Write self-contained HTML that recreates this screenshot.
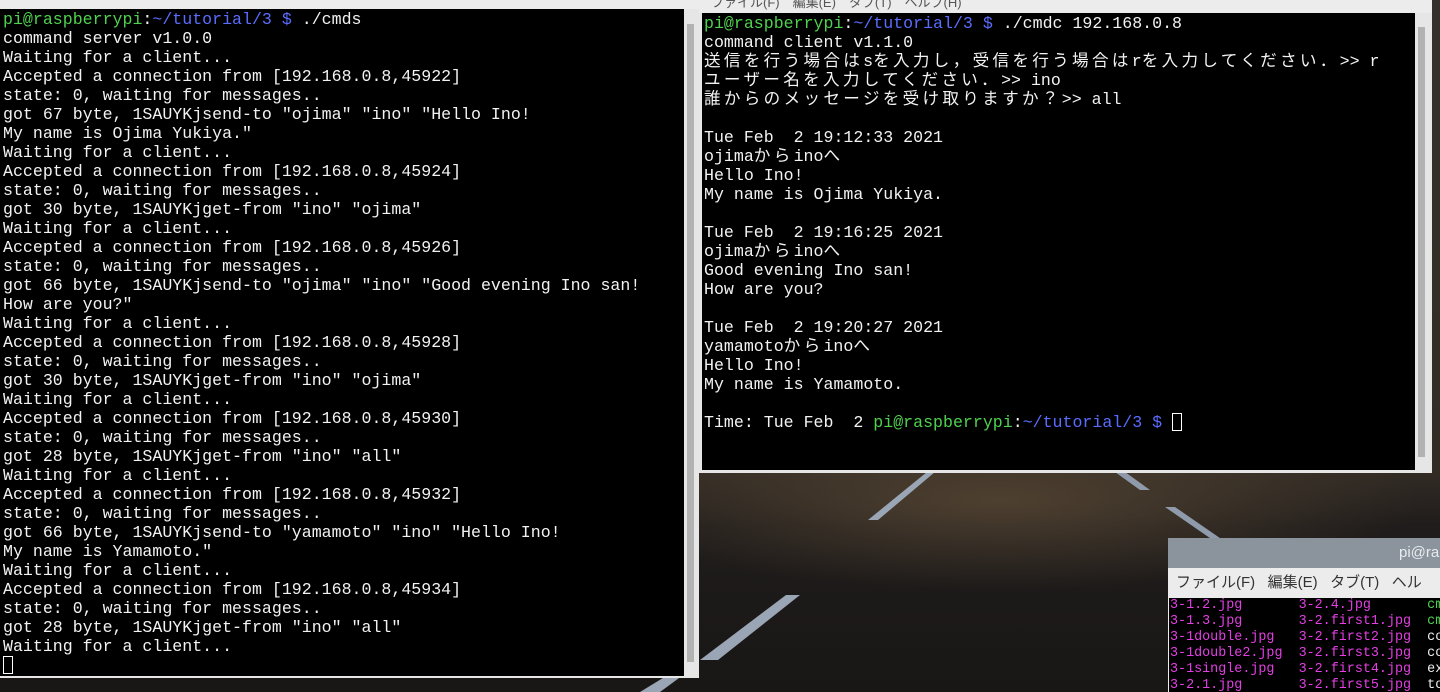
<!DOCTYPE html>
<html><head><meta charset="utf-8"><style>
*{margin:0;padding:0;box-sizing:border-box}
body{width:1440px;height:692px;overflow:hidden;position:relative;background:#1c1a19;font-family:"Liberation Mono","Noto Sans CJK JP",monospace}
.bg{position:absolute;left:0;top:0;width:1440px;height:692px;background:
radial-gradient(ellipse 420px 90px at 1000px 500px,#4e4030 0%,rgba(60,50,38,0) 100%),
linear-gradient(180deg,#35302a 0%,#332c25 68%,#1f1c1b 76%,#191716 100%)}
.term{position:absolute;background:#000;color:#f2f2f2;font-size:16.6px;line-height:19px;white-space:pre;overflow:hidden}
.g{color:#4fd14f}.b{color:#5a6cff}
.j{letter-spacing:3.3px}
.th{position:absolute;background:#b2b2b2}
.cur{display:inline-block;width:10px;height:18px;border:1px solid #fff;vertical-align:-4px}
</style></head><body>
<div class="bg"></div>
<svg style="position:absolute;left:0;top:0" width="1440" height="692">
<polygon points="868,520 878,520 935,472 927,472" fill="#9aa5b5"/>
<polygon points="700,660 718,660 800,595 786,595" fill="#9aa5b5"/>
<polygon points="640,692 660,692 690,670 676,670" fill="#9aa5b5"/>
<polygon points="1115,472 1125,472 1150,490 1140,490" fill="#8f9aab"/>
<polygon points="1165,507 1175,507 1230,545 1220,545" fill="#8f9aab"/>
</svg>
<div style="position:absolute;left:0;top:0;width:699px;height:9px;background:#ececec"></div>
<div style="position:absolute;left:699px;top:0;width:733px;height:13px;background:#ececec;font:13px 'Liberation Sans','Noto Sans CJK JP',sans-serif;color:#555;line-height:6px;padding-left:12px;overflow:hidden">ファイル(F)　編集(E)　タブ(T)　ヘルプ(H)</div>
<div style="position:absolute;left:0;top:9px;width:699px;height:669px;background:#e6e6e6"></div>
<div class="term" style="left:0;top:9px;width:684px;height:667px;padding:1px 0 0 3px"><span class="g">pi@raspberrypi</span>:<span class="b">~/tutorial/3 $</span> ./cmds
command server v1.0.0
Waiting for a client...
Accepted a connection from [192.168.0.8,45922]
state: 0, waiting for messages..
got 67 byte, 1SAUYKjsend-to "ojima" "ino" "Hello Ino!
My name is Ojima Yukiya."
Waiting for a client...
Accepted a connection from [192.168.0.8,45924]
state: 0, waiting for messages..
got 30 byte, 1SAUYKjget-from "ino" "ojima"
Waiting for a client...
Accepted a connection from [192.168.0.8,45926]
state: 0, waiting for messages..
got 66 byte, 1SAUYKjsend-to "ojima" "ino" "Good evening Ino san!
How are you?"
Waiting for a client...
Accepted a connection from [192.168.0.8,45928]
state: 0, waiting for messages..
got 30 byte, 1SAUYKjget-from "ino" "ojima"
Waiting for a client...
Accepted a connection from [192.168.0.8,45930]
state: 0, waiting for messages..
got 28 byte, 1SAUYKjget-from "ino" "all"
Waiting for a client...
Accepted a connection from [192.168.0.8,45932]
state: 0, waiting for messages..
got 66 byte, 1SAUYKjsend-to "yamamoto" "ino" "Hello Ino!
My name is Yamamoto."
Waiting for a client...
Accepted a connection from [192.168.0.8,45934]
state: 0, waiting for messages..
got 28 byte, 1SAUYKjget-from "ino" "all"
Waiting for a client...
<span class="cur"></span></div>
<div class="th" style="left:687px;top:24px;width:7px;height:638px"></div>
<div style="position:absolute;left:699px;top:13px;width:733px;height:460px;background:#e6e6e6"></div>
<div class="term" style="left:702px;top:13px;width:713px;height:457px;padding:1px 0 0 2px"><span class="g">pi@raspberrypi</span>:<span class="b">~/tutorial/3 $</span> ./cmdc 192.168.0.8
command client v1.1.0
<span class="j">送信を行う場合は</span>s<span class="j">を入力し，受信を行う場合は</span>r<span class="j">を入力してください．</span>&gt;&gt; r
<span class="j">ユーザー名を入力してください．</span>&gt;&gt; ino
<span class="j">誰からのメッセージを受け取りますか？</span>&gt;&gt; all

Tue Feb  2 19:12:33 2021
ojima<span class="j">から</span>ino<span class="j">へ</span>
Hello Ino!
My name is Ojima Yukiya.

Tue Feb  2 19:16:25 2021
ojima<span class="j">から</span>ino<span class="j">へ</span>
Good evening Ino san!
How are you?

Tue Feb  2 19:20:27 2021
yamamoto<span class="j">から</span>ino<span class="j">へ</span>
Hello Ino!
My name is Yamamoto.

Time: Tue Feb  2 <span class="g">pi@raspberrypi</span>:<span class="b">~/tutorial/3 $</span> <span class="cur"></span></div>
<div class="th" style="left:1418px;top:27px;width:7px;height:430px"></div>
<div style="position:absolute;left:1168px;top:538px;width:272px;height:154px;background:#ececec"></div>
<div style="position:absolute;left:1168px;top:538px;width:272px;height:30px;background:#8b949c;color:#e8ecef;font:15px 'Liberation Sans',sans-serif;line-height:30px;padding-left:231px">pi@ra</div>
<div style="position:absolute;left:1176px;top:568px;width:264px;height:30px;font:15px 'Liberation Sans','Noto Sans CJK JP',sans-serif;color:#333;line-height:30px;white-space:pre">ファイル(F)   編集(E)   タブ(T)   ヘル</div>
<div class="term" style="left:1169px;top:598px;width:271px;height:94px;font-size:13.4px;line-height:16px;color:#e33fe3;padding-left:1px">3-1.2.jpg       3-2.4.jpg       <span class="g">cm</span>
3-1.3.jpg       3-2.first1.jpg  <span class="g">cm</span>
3-1double.jpg   3-2.first2.jpg  <span style="color:#eee">co</span>
3-1double2.jpg  3-2.first3.jpg  <span style="color:#eee">co</span>
3-1single.jpg   3-2.first4.jpg  <span style="color:#eee">ex</span>
3-2.1.jpg       3-2.first5.jpg  <span style="color:#eee">to</span></div>
</body></html>
